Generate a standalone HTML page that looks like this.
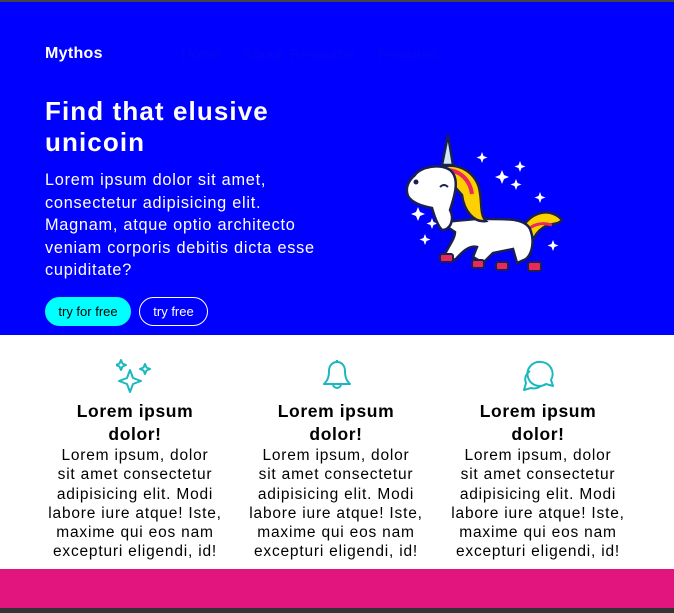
<!DOCTYPE html>
<html><head><meta charset="utf-8"><style>
*{margin:0;padding:0;box-sizing:border-box}
body{width:674px;height:613px;background:#fff;font-family:"Liberation Sans",sans-serif;position:relative;overflow:hidden}
.top{position:absolute;left:0;top:0;width:674px;height:2px;background:#444}
.hero{position:absolute;left:0;top:2px;width:674px;height:333px;background:#0000ff;color:#fff}
.logo{position:absolute;left:45px;top:43px;font-weight:bold;font-size:16px;letter-spacing:0.3px}
.nav{position:absolute;top:44px;font-size:15px;color:#0606ee}
h1{position:absolute;left:45px;top:94px;font-size:26px;line-height:31px;font-weight:bold;width:320px;letter-spacing:1.1px}
.p{position:absolute;left:45px;top:167px;width:340px;font-size:16.3px;line-height:22.5px;letter-spacing:0.75px;white-space:nowrap}
.b{position:absolute;top:295px;height:29px;border-radius:15px;font-size:13px;line-height:27px;text-align:center}
.b1{left:45px;width:86px;background:#00ffff;color:#000;border:1px solid #00ffff}
.b2{left:139px;width:69px;border:1px solid #fff;color:#fff}
.col{position:absolute;top:400px;width:180px;text-align:center;color:#000;white-space:nowrap}
.col h3{font-size:17.5px;line-height:23px;font-weight:bold;letter-spacing:0.6px}
.col p{font-size:15.5px;line-height:19.3px;letter-spacing:0.8px}
.ic{position:absolute;top:358px}
.foot{position:absolute;left:0;top:569px;width:674px;height:39px;background:#e2157e}
.fb{position:absolute;left:0;top:608px;width:674px;height:5px;background:#333}
</style></head><body>
<div class="top"></div>
<div class="hero">
<div class="logo">Mythos</div>
<div class="nav" style="left:181px">Home</div>
<div class="nav" style="left:243px">About</div>
<div class="nav" style="left:290px">Resource</div>
<div class="nav" style="left:378px">Features</div>
<h1>Find that elusive<br>unicoin</h1>
<div class="p">Lorem ipsum dolor sit amet,<br>consectetur adipisicing elit.<br>Magnam, atque optio architecto<br>veniam corporis debitis dicta esse<br>cupiditate?</div>
<div class="b b1">try for free</div>
<div class="b b2">try free</div>
<svg style="position:absolute;left:400px;top:128px" width="170" height="150" viewBox="0 0 170 150">
<g fill="#fff"><path d="M82 22l1.5 4 4 1.5-4 1.5-1.5 4-1.5-4-4-1.5 4-1.5z"/><path d="M102 40l2 5 5 2-5 2-2 5-2-5-5-2 5-2z"/><path d="M120 31l1.5 4 4 1.5-4 1.5-1.5 4-1.5-4-4-1.5 4-1.5z"/><path d="M116 49l1.5 4 4 1.5-4 1.5-1.5 4-1.5-4-4-1.5 4-1.5z"/><path d="M140 62l1.5 4 4 1.5-4 1.5-1.5 4-1.5-4-4-1.5 4-1.5z"/><path d="M18 77l2 5 5 2-5 2-2 5-2-5-5-2 5-2z"/><path d="M32 88l1.5 4 4 1.5-4 1.5-1.5 4-1.5-4-4-1.5 4-1.5z"/><path d="M25 104l1.5 4 4 1.5-4 1.5-1.5 4-1.5-4-4-1.5 4-1.5z"/><path d="M153 110l1.5 4 4 1.5-4 1.5-1.5 4-1.5-4-4-1.5 4-1.5z"/></g>
<path d="M48 5l-6 30h11z" fill="#cfe6f5" stroke="#1a2150" stroke-width="2.5"/>
<path d="M122 98c10-18 30-20 40-8-4 5-10 3-16 6-6 3-10 8-12 12z" fill="#ffd000" stroke="#1a2150" stroke-width="2.5"/>
<path d="M126 102c6-8 16-10 26-7" stroke="#e8295d" stroke-width="3" fill="none"/>
<path d="M40 92c15 0 30-4 50-3 20 0 35 0 40 10 5 12 2 25-4 30l-9 4-4-14-20 4-10 10-10-6 4-10c-8-2-15 5-22 13l-10-6c5-10 10-16 10-22z" fill="#fff" stroke="#1a2150" stroke-width="2.5"/>
<path d="M38 38c20-8 40 5 42 25 2 12 0 22 6 28-12 2-22-10-24-26z" fill="#ffd000" stroke="#1a2150" stroke-width="2.5"/>
<path d="M46 40c14 0 24 10 26 24" stroke="#e8295d" stroke-width="4" fill="none"/>
<path d="M15 45c5-8 25-12 35-5 10 8 5 25 0 40 5 10 0 20-8 20-5-5-8-15-10-22-10-2-20-5-24-12-3-8 0-15 7-21z" fill="#fff" stroke="#1a2150" stroke-width="2.5"/>
<circle cx="16" cy="52" r="2.5" fill="#1a2150"/>
<path d="M40 57q4-4 8 0" stroke="#1a2150" stroke-width="2" fill="none"/>
<g fill="#e8295d" stroke="#1a2150" stroke-width="2"><rect x="40" y="124" width="13" height="8" rx="2"/><rect x="72" y="130" width="12" height="8" rx="2"/><rect x="96" y="132" width="12" height="8" rx="2"/><rect x="128" y="132" width="13" height="9" rx="2"/></g>
</svg>
</div>
<svg class="ic" style="left:116px" width="36" height="38" viewBox="0 0 36 38" fill="none" stroke="#1ab8be" stroke-width="2" stroke-linejoin="round"><path d="M14 12l3 8 8 3-8 3-3 8-3-8-8-3 8-3z"/><path d="M5 2l1.5 3.5 3.5 1.5-3.5 1.5-1.5 3.5-1.5-3.5-3.5-1.5 3.5-1.5z"/><path d="M29 6l1.5 3.5 3.5 1.5-3.5 1.5-1.5 3.5-1.5-3.5-3.5-1.5 3.5-1.5z"/></svg>
<svg class="ic" style="left:322px" width="30" height="36" viewBox="0 0 30 36" fill="none" stroke="#1ab8be" stroke-width="2" stroke-linejoin="round"><path d="M15 4c-5 0-8 4-8 9 0 7-2 10-5 13h26c-3-3-5-6-5-13 0-5-3-9-8-9z"/><path d="M11 26a4 4 0 0 0 8 0"/><path d="M15 2v2"/></svg>
<svg class="ic" style="left:522px" width="34" height="36" viewBox="0 0 34 36" fill="none" stroke="#1ab8be" stroke-width="2" stroke-linejoin="round"><path d="M19 4a12 12 0 1 0 5 22l7 2-2-6a12 12 0 0 0-10-18z"/><path d="M8 13c-4 3-6 7-4 12l-2 7 7-2c3 1 7 0 10-2"/></svg>
<div class="col" style="left:45px"><h3>Lorem ipsum<br>dolor!</h3><p>Lorem ipsum, dolor<br>sit amet consectetur<br>adipisicing elit. Modi<br>labore iure atque! Iste,<br>maxime qui eos nam<br>excepturi eligendi, id!</p></div>
<div class="col" style="left:246px"><h3>Lorem ipsum<br>dolor!</h3><p>Lorem ipsum, dolor<br>sit amet consectetur<br>adipisicing elit. Modi<br>labore iure atque! Iste,<br>maxime qui eos nam<br>excepturi eligendi, id!</p></div>
<div class="col" style="left:448px"><h3>Lorem ipsum<br>dolor!</h3><p>Lorem ipsum, dolor<br>sit amet consectetur<br>adipisicing elit. Modi<br>labore iure atque! Iste,<br>maxime qui eos nam<br>excepturi eligendi, id!</p></div>
<div class="foot"></div><div class="fb"></div>
</body></html>
